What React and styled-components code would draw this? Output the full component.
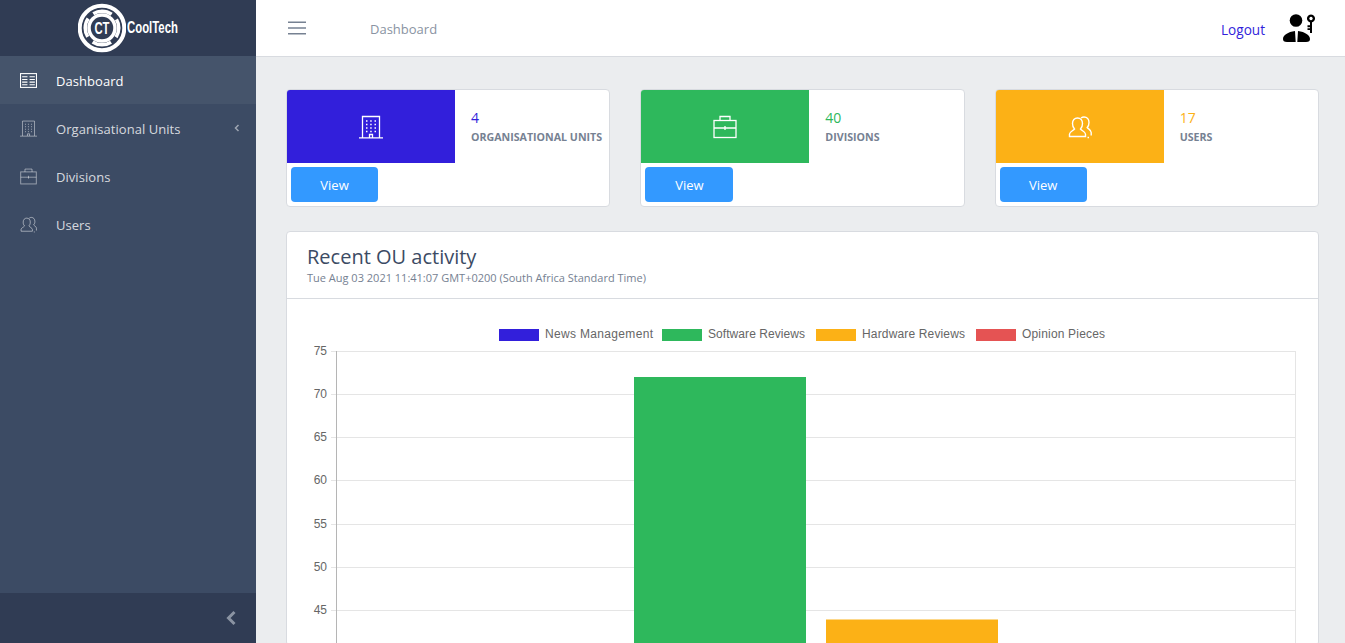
import React from "react";
import styled, { createGlobalStyle } from "styled-components";

const Global = createGlobalStyle`
  html, body { margin: 0; padding: 0; height: 100%; overflow: hidden; }
  body { font-family: "Open Sans", "Noto Sans", sans-serif; font-size: 13px; color: #3c4b64; background: #ebedef; }
  * { box-sizing: border-box; }
`;

const Shell = styled.div`display: flex; height: 100vh; overflow: hidden;`;
const Sidebar = styled.aside`width: 256px; flex: none; display: flex; flex-direction: column; background: #3c4b64;`;
const Brand = styled.div`height: 56px; flex: none; background: #303c54; display: flex; align-items: center; padding-left: 78px; gap: 1px;`;
const BrandName = styled.span`
  display: inline-block; width: 51px; font-family: "Liberation Sans", sans-serif; font-weight: 700; font-size: 16px;
  color: #fff; white-space: nowrap; transform: scaleX(0.71); transform-origin: left center;
`;
const Nav = styled.nav`flex: 1; display: flex; flex-direction: column;`;
const NavItem = styled.a`
  height: 48px; display: flex; align-items: center; padding-left: 20px;
  color: ${p => (p.$active ? "#fff" : "rgba(255,255,255,.8)")};
  background: ${p => (p.$active ? "rgba(255,255,255,.05)" : "transparent")};
  svg { flex: none; color: ${p => (p.$active ? "#fff" : "rgba(255,255,255,.5)")}; }
`;
const NavLabel = styled.span`margin-left: 19px; padding-top: 2px; flex: 1; letter-spacing: 0.05px;`;
const NavCaret = styled.svg`width: 6px; height: 8px; margin-right: 16px;`;
const SideFooter = styled.div`height: 50px; flex: none; background: #303c54; display: flex; align-items: center; justify-content: flex-end; padding-right: 19px;`;

const Main = styled.div`flex: 1; min-width: 0; display: flex; flex-direction: column;`;
const Header = styled.header`height: 57px; flex: none; background: #fff; border-bottom: 1px solid #d8dbe0; display: flex; align-items: center; padding: 0 29px 0 32px;`;
const Crumb = styled.span`margin-left: 64px; padding-top: 2px; color: #8a93a2; flex: 1;`;
const Logout = styled.a`color: #321fdb; font-size: 13.6px; padding-top: 2px; margin-right: 18px;`;

const Content = styled.main`padding: 32px 26px 0 30px;`;
const Cards = styled.div`display: grid; grid-template-columns: repeat(3, 1fr); gap: 30px; margin-bottom: 24px;`;
const Card = styled.section`background: #fff; border: 1px solid #d8dbe0; border-radius: 4px; overflow: hidden;`;
const StatTop = styled.div`display: flex; height: 73px;`;
const StatIcon = styled.div`width: 168px; flex: none; background: ${p => p.$c}; display: flex; align-items: center; justify-content: center; color: #fff;`;
const StatText = styled.div`padding: 18px 0 0 16px; white-space: nowrap;`;
const StatValue = styled.div`font-size: 14px; line-height: 20px; color: ${p => p.$c};`;
const StatLabel = styled.div`font-size: 10.65px; line-height: 18px; font-weight: 700; color: #768192;`;
const ViewButton = styled.button`
  display: block; width: ${p => p.$w}px; height: 35px; margin: 4px 0 4px 4px; border: 0; border-radius: 4px;
  background: #39f; color: #fff; font: inherit; padding: 0;
`;
const ChartHead = styled.div`height: 67px; padding: 12px 20px 0; border-bottom: 1px solid #d8dbe0;`;
const ChartTitle = styled.h4`margin: 0; font-size: 20px; line-height: 26px; font-weight: 400; color: #3c4b64;`;
const ChartSub = styled.div`margin-top: 1px; font-size: 11px; line-height: 13px; color: #768192;`;
const ChartSvg = styled.svg`display: block; width: 100%; height: 346px;`;

const line = { fill: "none", stroke: "currentColor", strokeWidth: 1 };

const Spreadsheet = ({ s = 16 }) => (
  <svg width={s} height={s} viewBox="0 0 16 16" {...line}>
    <rect x=".5" y="1.500" width="15" height="13" />
    <path d="M2 4.500h5M9 4.500h5M2 7h5M9 7h5M2 9.500h5M9 9.500h5M2 12h5M9 12h5" />
  </svg>
);
const Building = ({ s = 16 }) => (
  <svg width={s} height={s} viewBox="0 0 24 24" fill="none" stroke="currentColor" strokeWidth="1.300">
    <path d="M3.500 22.500V1.500h17v21M0 22.800h24M10.500 22.500v-3h3v3" />
    <path d="M7 6h1.500M11.200 6h1.500M15.500 6h1.500M7 9.500h1.500M11.200 9.500h1.500M15.500 9.500h1.500M7 13h1.500M11.200 13h1.500M15.500 13h1.500M7 16.500h1.500M11.200 16.500h1.500M15.500 16.500h1.500" strokeWidth="1.400" />
  </svg>
);
const Briefcase = ({ s = 16 }) => (
  <svg width={s} height={s} viewBox="0 0 24 24" fill="none" stroke="currentColor" strokeWidth="1.300">
    <rect x="1" y="5.500" width="22" height="17" />
    <path d="M7 5.500V1.500h10v4M1 13h22M12 11v4" />
  </svg>
);
const People = ({ s = 16 }) => (
  <svg width={s} height={s} viewBox="0 0 24 24" fill="none" stroke="currentColor" strokeWidth="1.400">
    <path d="M1.500 21.500v-2.500c0-2 4-3.500 5-5-1.600-1.500-2-3-2-5.500 0-3.200 2-5.500 5-5.500s5 2.300 5 5.500c0 2.500-.4 4-2 5.500 1 1.500 5 3 5 5v2.500z" />
    <path d="M13 3c1-.7 2-1 3-1 3 0 5 2.300 5 5.500 0 2.500-.4 3.500-1.800 5 1.200 1.500 4 2.500 4 5v3M19.500 22.500h1.500" />
  </svg>
);
const Hamburger = () => (
  <svg width="18" height="14" viewBox="0 0 18 14" fill="none" stroke="#768192" strokeWidth="1.600">
    <path d="M0 1.200h18M0 7h18M0 12.800h18" />
  </svg>
);
const UserKey = () => (
  <svg width="33" height="28" viewBox="0 0 33 28" fill="#000">
    <circle cx="13" cy="6.500" r="6.300" />
    <path d="M0 25C0 21 5 18 12 17L12.700 28H4C1 28 0 27 0 25zM27 25C27 21 22 18 15 17L14.300 28H23C26 28 27 27 27 25z" />
    <path d="M28 .5a4 4 0 1 1-.02 0zm0 2.300a1.700 1.700 0 1 0 .02 0z" fillRule="evenodd" />
    <path d="M27 8h2v11h-2v-3h-2.500v-1.800H27v-1H24.500v-2H27z" />
  </svg>
);
const Logo = () => (
  <svg width="48" height="50" viewBox="0 0 48 50">
    <circle cx="24" cy="25" r="22.300" fill="none" stroke="#fff" strokeWidth="4" />
    <circle cx="24" cy="25" r="16.800" fill="none" stroke="#fff" strokeWidth="3.500" strokeDasharray="19.400 7" strokeDashoffset="9.700" />
    <circle cx="24" cy="25" r="13" fill="none" stroke="#fff" strokeWidth="3.500" />
    <text x="24" y="30.500" textAnchor="middle" fontFamily="'Liberation Sans',sans-serif" fontWeight="700" fontSize="17" fill="#fff" textLength="15" lengthAdjust="spacingAndGlyphs">CT</text>
  </svg>
);

const stats = [
  { c: "#321fdb", value: "4", label: "ORGANISATIONAL UNITS", Icon: Building, w: 87 },
  { c: "#2eb85c", value: "40", label: "DIVISIONS", Icon: Briefcase, w: 88 },
  { c: "#fcb116", value: "17", label: "USERS", Icon: People, w: 87 },
];
const gridYs = [351, 394, 437, 480, 524, 567, 610];
const legend = [
  { x: 499, c: "#321fdb", t: "News Management", w: 108 },
  { x: 662, c: "#2eb85c", t: "Software Reviews", w: 97 },
  { x: 816, c: "#fcb116", t: "Hardware Reviews", w: 103 },
  { x: 976, c: "#e55353", t: "Opinion Pieces", w: 83 },
];
const axisFont = "'Liberation Sans', Arial, sans-serif";

const Chart = () => (
  <ChartSvg viewBox="0 299 1031 346" preserveAspectRatio="xMinYMin" role="img">
    <g transform="translate(-287 0)">
      {legend.map(l => (
        <g key={l.t}>
          <rect x={l.x} y="329" width="40" height="12" fill={l.c} />
          <text x={l.x + 46} y="338" fontFamily={axisFont} fontSize="12" fill="#666" textLength={l.w}>{l.t}</text>
        </g>
      ))}
      {gridYs.map((y, i) => (
        <g key={y}>
          <path d={`M331 ${y + 0.5}H1296`} stroke="#e5e5e5" />
          <text x="327" y={y + 4} textAnchor="end" fontFamily={axisFont} fontSize="12" fill="#666">{75 - i * 5}</text>
        </g>
      ))}
      <path d="M336.500 351V645" stroke="#b5b5b5" />
      <path d="M1295.500 351V645" stroke="#e5e5e5" />
      <rect x="634" y="377" width="172" height="268" fill="#2eb85c" />
      <rect x="826" y="619.500" width="172" height="26" fill="#fcb116" />
    </g>
  </ChartSvg>
);

export default function App() {
  return (
    <>
      <Global />
      <Shell>
        <Sidebar>
          <Brand><Logo /><BrandName>CoolTech</BrandName></Brand>
          <Nav>
            <NavItem $active><Spreadsheet s={17} /><NavLabel>Dashboard</NavLabel></NavItem>
            <NavItem><Building s={17} /><NavLabel>Organisational Units</NavLabel>
              <NavCaret viewBox="0 0 6 8" fill="none" stroke="rgba(255,255,255,.5)" strokeWidth="1.500"><path d="M4.500 1L1.500 4l3 3" /></NavCaret>
            </NavItem>
            <NavItem><Briefcase s={17} /><NavLabel>Divisions</NavLabel></NavItem>
            <NavItem><People s={17} /><NavLabel>Users</NavLabel></NavItem>
          </Nav>
          <SideFooter>
            <svg width="12" height="16" viewBox="0 0 12 16" fill="none" stroke="#8a93a2" strokeWidth="3"><path d="M9.500 2L3.500 8l6 6" /></svg>
          </SideFooter>
        </Sidebar>
        <Main>
          <Header>
            <Hamburger />
            <Crumb>Dashboard</Crumb>
            <Logout>Logout</Logout>
            <UserKey />
          </Header>
          <Content>
            <Cards>
              {stats.map(({ c, value, label, Icon, w }) => (
                <Card key={label}>
                  <StatTop>
                    <StatIcon $c={c}><Icon s={24} /></StatIcon>
                    <StatText>
                      <StatValue $c={c}>{value}</StatValue>
                      <StatLabel>{label}</StatLabel>
                    </StatText>
                  </StatTop>
                  <ViewButton $w={w}>View</ViewButton>
                </Card>
              ))}
            </Cards>
            <Card>
              <ChartHead>
                <ChartTitle>Recent OU activity</ChartTitle>
                <ChartSub>Tue Aug 03 2021 11:41:07 GMT+0200 (South Africa Standard Time)</ChartSub>
              </ChartHead>
              <Chart />
            </Card>
          </Content>
        </Main>
      </Shell>
    </>
  );
}
